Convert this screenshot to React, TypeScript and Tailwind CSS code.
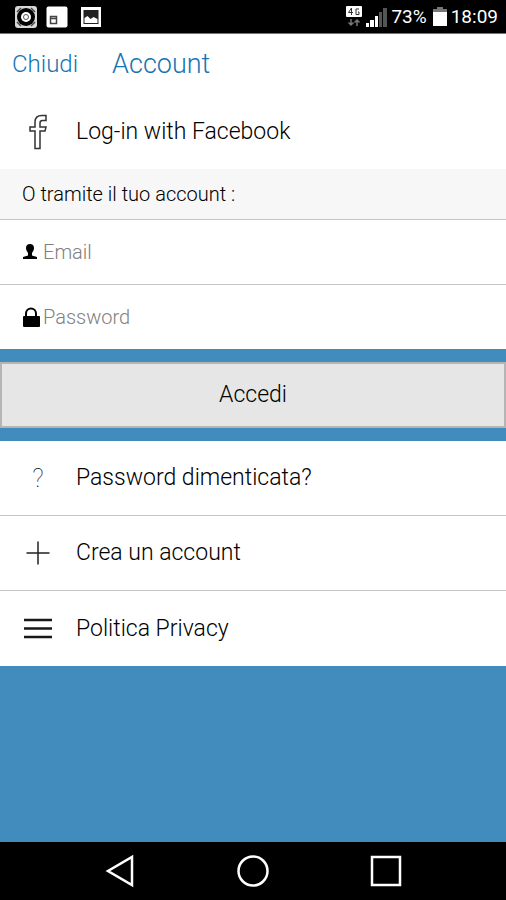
import type { ReactNode } from 'react';

function StatusBar() {
  return (
    <div className="flex h-[34px] items-center justify-between border-b border-neutral-500 bg-black pr-2 pl-3.5 font-normal text-white">
      <div className="flex items-center gap-2">
        <svg width="24" height="24" viewBox="0 0 24 24" fill="none">
          <rect x="1" y="1" width="22" height="22" rx="3" fill="#d8d8d8" />
          <path d="M3 7l4-4M17 3l4 4M3 17l4 4M17 21l4-4" stroke="#444" strokeWidth="1.5" />
          <circle cx="12" cy="12" r="9" fill="#000" />
          <circle cx="12" cy="12" r="5" fill="#fff" />
          <circle cx="12" cy="12" r="2.5" stroke="#555" />
        </svg>
        <svg width="22" height="22" viewBox="0 0 22 22" fill="none">
          <rect x="0.5" y="0.5" width="21" height="21" rx="2" fill="#fff" />
          <path d="M4.5 10.5h6v7h-6zM4.5 12.5h6" stroke="#444" strokeWidth="1.5" />
        </svg>
        <svg width="22" height="22" viewBox="0 0 22 22" fill="none" className="ml-1">
          <rect x="1" y="1" width="20" height="20" fill="#fff" />
          <rect x="3.500" y="4" width="15" height="14" fill="#222" />
          <path d="M4.500 17v-5l3-2 3 3 3-2 4 2v4z" fill="#fff" />
        </svg>
      </div>
      <div className="flex items-center text-[19px] leading-6">
        <svg width="16" height="22" viewBox="0 0 16 22" fill="none">
          <rect width="16" height="11" rx="1" fill="#fff" />
          <path d="M5.500 2L2.500 6.500H7M5.500 2V9M13 3H10V8.500H13V6H12" stroke="#333" />
          <path d="M5 13v6M2.500 16.500L5 19l2.500-2.500M11 20v-6M8.500 16.500L11 14l2.500 2.500" stroke="#777" strokeWidth="1.500" />
        </svg>
        <svg width="21" height="22" viewBox="0 0 21 22" className="mx-1">
          <path d="M0 17h3v4H0zM4 14h4v7H4zM9 10h3v11H9z" fill="#fff" />
          <path d="M13 6h3v15h-3zM17 2h4v19h-4z" fill="#555" />
        </svg>
        <span>73%</span>
        <svg width="14" height="20" viewBox="0 0 14 20" className="mr-1 ml-1.5">
          <path d="M4 0h6v2h4v4H0V2h4z" fill="#777" />
          <path d="M0 5h14v14H0z" fill="#fff" />
        </svg>
        <span>18:09</span>
      </div>
    </div>
  );
}

function MenuRow({ icon, children }: { icon: ReactNode; children: ReactNode }) {
  return (
    <button type="button" className="flex h-[75px] w-full items-center border-b border-[#c4c4c4] bg-white pl-[22px] text-left text-[23px] leading-7 last:border-b-0">
      <span className="mr-[22px] flex w-8 justify-center">{icon}</span>
      {children}
    </button>
  );
}

export default function App() {
  return (
    <div className="flex min-h-screen flex-col bg-[#428bbd] font-['Roboto',sans-serif] font-light text-black">
      <StatusBar />

      <header className="flex h-[60px] items-center gap-[34px] bg-white pl-3 text-[#1674b4]">
        <button type="button" className="text-2xl">Chiudi</button>
        <h1 className="text-[27px] leading-8 font-light">Account</h1>
      </header>

      <main className="flex-1">
        <div>
          <MenuRow
            icon={
              <svg width="18" height="36" viewBox="0 0 18 36" fill="none" stroke="#333" strokeWidth="1.500">
                <path d="M17 1.500h-4C8.500 1.500 6 4 6 8v5H1v4h5v17.500h5V17h5l1-4h-6V9c0-2 1-2.500 2.500-2.500H17z" />
              </svg>
            }
          >
            Log-in with Facebook
          </MenuRow>
        </div>

        <form onSubmit={(e) => e.preventDefault()}>
          <p className="flex h-[51px] items-center border-b border-[#c4c4c4] bg-[#f7f7f7] pl-[22px] text-xl">
            O tramite il tuo account :
          </p>
          <div className="flex h-[65px] items-center border-b border-[#c4c4c4] bg-white pl-[22px]">
            <label htmlFor="email" aria-label="Email" className="w-[21px]">
              <svg width="16" height="16" viewBox="0 0 16 16" fill="#000">
                <path d="M8 0c2.500 0 4 1.500 4 4 0 2-1 3.500-2 5v2.500l5 1.500v2H1v-2l5-1.500V9C5 7.500 4 6 4 4c0-2.500 1.500-4 4-4z" />
              </svg>
            </label>
            <input id="email" type="email" placeholder="Email" className="min-w-0 flex-1 text-xl outline-none placeholder:text-[#808080]" />
          </div>
          <div className="flex h-16 items-center bg-white pl-[22px]">
            <label htmlFor="password" aria-label="Password" className="w-[21px]">
              <svg width="18" height="20" viewBox="0 0 18 20" fill="none">
                <path d="M4 10V6.500a5 5 0 0 1 10 0V10" stroke="#000" strokeWidth="2" />
                <rect x="1" y="9" width="17" height="11" rx="1" fill="#000" />
              </svg>
            </label>
            <input id="password" type="password" placeholder="Password" className="min-w-0 flex-1 text-xl outline-none placeholder:text-[#808080]" />
          </div>
          <button type="submit" className="my-[13px] h-[66px] w-full border-2 border-[#b5b5b5] bg-[#e6e6e6] text-[23px] leading-7">
            Accedi
          </button>
        </form>

        <div>
          <MenuRow icon={<span className="text-[26px] font-thin">?</span>}>Password dimenticata?</MenuRow>
          <MenuRow
            icon={
              <svg width="24" height="24" viewBox="0 0 24 24" stroke="#222" strokeWidth="1.500">
                <path d="M12 0.500v23M0.500 12h23" />
              </svg>
            }
          >
            Crea un account
          </MenuRow>
          <MenuRow
            icon={
              <svg width="28" height="22" viewBox="0 0 28 22" stroke="#181818" strokeWidth="2.500">
                <path d="M0 2h28M0 10.500h28M0 19h28" />
              </svg>
            }
          >
            Politica Privacy
          </MenuRow>
        </div>
      </main>

      <nav className="flex h-[58px] items-center justify-between bg-black px-[104px]">
        <button type="button" aria-label="Back">
          <svg width="32" height="34" viewBox="0 0 32 34" fill="none" stroke="#fff" strokeWidth="2.500">
            <path d="M28 3v28L4 17z" />
          </svg>
        </button>
        <button type="button" aria-label="Home">
          <svg width="34" height="34" viewBox="0 0 34 34" fill="none" stroke="#fff" strokeWidth="2.500">
            <circle cx="17" cy="17" r="14.500" />
          </svg>
        </button>
        <button type="button" aria-label="Recent apps">
          <svg width="32" height="34" viewBox="0 0 32 34" fill="none" stroke="#fff" strokeWidth="2.500">
            <rect x="2" y="3" width="28" height="28" />
          </svg>
        </button>
      </nav>
    </div>
  );
}
